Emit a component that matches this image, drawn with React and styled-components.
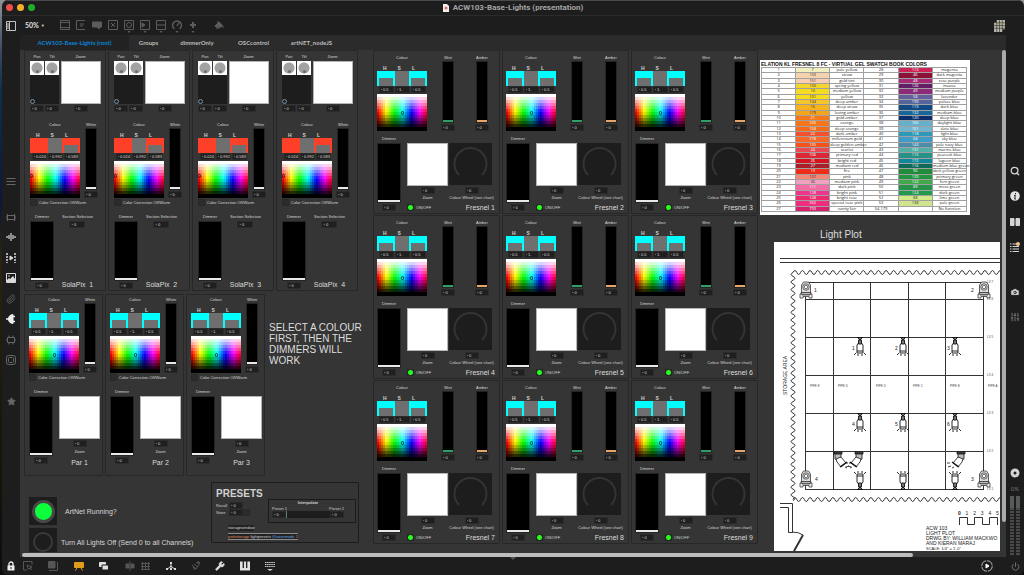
import React from "react";
import styled, { createGlobalStyle, css } from "styled-components";
import {
  Search,
  Camera,
  SlidersVertical,
  Paperclip,
  Wrench,
  Power,
  Star,
} from "lucide-react";

const GlobalStyle = createGlobalStyle`
  *, *::before, *::after {
    box-sizing: border-box;
  }
  body {
    margin: 0;
    background: linear-gradient(#8e9496, #3d4a63 50px, #0d2f4a 90px, #0c1838 200px, #2a240c 260px, #1b1707 420px, #0c0c0c);
    font-family: "Liberation Sans", Arial, sans-serif;
    color: #d0d0d0;
  }
  button, input {
    font: inherit;
    color: inherit;
    border: 0;
    margin: 0;
    padding: 0;
    background: none;
  }
`;

/* ---------- window ---------- */

const Window = styled.div`
  display: flex;
  flex-direction: column;
  height: 100vh;
  margin-left: 2px;
  border-radius: 6px;
  background: #1d1d1d;
  overflow: hidden;
`;

const TitleBar = styled.header`
  position: relative;
  display: flex;
  align-items: center;
  justify-content: center;
  height: 16px;
  flex-shrink: 0;
  gap: 4px;
  border-top: 1px solid #4a4a4a;
  border-bottom: 1px solid #2b2b2b;
  font: bold 8px/14px Roboto, "Liberation Sans", sans-serif;
  color: #a4a4a4;
  h1 {
    margin: 0;
    font: inherit;
  }
`;

const Lights = styled.div`
  position: absolute;
  left: 4px;
  top: 3px;
  display: flex;
  gap: 4px;
`;

const Light = styled.button`
  width: 7px;
  height: 7px;
  border-radius: 50%;
  background: ${(props) => props.$color};
`;

const Toolbar = styled.div`
  display: flex;
  align-items: center;
  height: 19px;
  flex-shrink: 0;
  padding: 0 17px 0 4px;
  color: #5a5d5e;
`;

const ToggleButton = styled.button`
  display: flex;
  color: #c4c4c4;
`;

const ZoomButton = styled.button`
  margin: 0 10px 0 9px;
  width: 22px;
  white-space: nowrap;
  text-align: left;
  font: bold 7px/10px Lato, sans-serif;
  color: #e0e0e0;
  span {
    font-size: 4px;
    margin-left: 1px;
    vertical-align: 1px;
  }
`;

const ToolButton = styled.button`
  display: flex;
  justify-content: center;
  width: 16px;
  margin-left: ${(props) => (props.$apart ? "10px" : "0")};
`;

const Spacer = styled.div`
  flex: 1;
`;

const Main = styled.div`
  display: flex;
  flex: 1;
  min-height: 0;
`;

const Sidebar = styled.nav`
  display: flex;
  flex-direction: column;
  align-items: center;
  width: 18px;
  flex-shrink: 0;
  color: ${(props) => props.$color || "#666"};
`;

const IconGroup = styled.div`
  display: flex;
  flex-direction: column;
  align-items: center;
  justify-content: space-between;
  height: ${(props) => props.$height}px;
  margin-top: ${(props) => props.$top}px;
`;

const IconButton = styled.button`
  display: flex;
  align-items: center;
  justify-content: center;
  width: 10px;
  height: 10px;
  color: ${(props) => props.$color || "inherit"};
`;

const Centre = styled.div`
  display: flex;
  flex-direction: column;
  flex: 1;
  min-width: 0;
  background: #353535;
`;

const Tabs = styled.div`
  display: flex;
  height: 15px;
  flex-shrink: 0;
  background: #2b2b2b;
`;

const Tab = styled.button`
  padding: 0 8px;
  font: bold 6px/14px Lato, sans-serif;
  text-align: center;
  min-width: ${(props) => props.$width}px;
  white-space: nowrap;
  color: ${(props) => (props.$active ? "#0a84d8" : "#bcbcbc")};
  background: ${(props) => (props.$active ? "#222" : "transparent")};
`;

const Scroller = styled.div`
  display: flex;
  flex: 1;
  min-height: 0;
`;

const Canvas = styled.main`
  display: flex;
  flex: 1;
  min-width: 0;
  padding-left: 4px;
  gap: 2px;
  overflow: hidden;
`;

const VerticalBar = styled.div`
  width: 4px;
  height: 94%;
  flex-shrink: 0;
  border-radius: 2px;
  background: #ababab;
`;

const HorizontalBar = styled.div`
  height: 4px;
  width: calc(90% + 4px);
  flex-shrink: 0;
  margin: 1px 0 0 2px;
  border-radius: 2px;
  background: #bdbdbd;
`;

const BottomBar = styled.footer`
  position: relative;
  display: flex;
  align-items: center;
  height: 18px;
  flex-shrink: 0;
  padding: 0 4px;
  color: #565656;
`;

const BottomButton = styled.button`
  display: flex;
  align-items: center;
  justify-content: center;
  width: 10px;
  height: 12px;
  margin-right: ${(props) => props.$gap}px;
  color: ${(props) => props.$color || "inherit"};
`;

const DrawerHandle = styled.div`
  position: absolute;
  left: 50%;
  top: 0;
  margin-left: -3px;
  border: 3px solid transparent;
  border-top-color: #555;
`;

/* ---------- patch controls ---------- */

const Row = styled.div`
  display: flex;
  align-items: ${(props) => props.$align || "flex-start"};
  gap: ${(props) => props.$gap || 0}px;
  margin-top: ${(props) => props.$top || 0}px;
`;

const Stack = styled.div`
  display: flex;
  flex-direction: column;
  align-items: ${(props) => props.$align || "center"};
  width: ${(props) => (props.$width ? props.$width + "px" : "auto")};
  gap: ${(props) => props.$gap || 0}px;
  flex-shrink: 0;
`;

const Panel = styled.section`
  width: ${(props) => props.$width}px;
  height: ${(props) => props.$height}px;
  padding: ${(props) => props.$pad};
  flex-shrink: 0;
  border: 1px solid #272727;
  border-radius: 1px;
`;

const Caption = styled.span`
  height: 7px;
  font-size: 4px;
  line-height: 7px;
  white-space: nowrap;
  color: #d4d4d4;
`;

const PanelName = styled.h2`
  margin: 0;
  font-size: 7px;
  line-height: 9px;
  font-weight: normal;
  white-space: pre;
  color: #dcdcdc;
`;

const NumberInput = styled.input`
  display: block;
  width: ${(props) => props.$width || 14}px;
  height: 7px;
  padding: 0 0 0 1px;
  border: 1px solid #2b2b2b;
  background: #1f1f1f;
  font-size: 4px;
  line-height: 5px;
  color: #dcdcdc;
`;

const FaderInput = styled.input`
  display: block;
  width: ${(props) => props.$width}px;
  height: ${(props) => props.$height}px;
  appearance: none;
  writing-mode: vertical-lr;
  direction: rtl;
  background: #000;
  border: 1px solid #242424;
  &::-webkit-slider-thumb {
    appearance: none;
    width: ${(props) => props.$width - 2}px;
    height: 2px;
    background: ${(props) => props.$color || "#e8e8e8"};
  }
`;

const CheckInput = styled.input`
  appearance: none;
  width: 7px;
  height: 7px;
  flex-shrink: 0;
  border: 1px solid #282828;
  background: ${(props) =>
    props.$led ? "radial-gradient(#24ff1c 2px, #262626 3px)" : "#2c2c2c"};
`;

const CheckLabel = styled.label`
  display: flex;
  align-items: center;
  gap: 2px;
  font-size: 4px;
  line-height: 7px;
  white-space: nowrap;
  color: #d4d4d4;
`;

const Pad = styled.div`
  width: ${(props) => props.$width}px;
  height: ${(props) => props.$height}px;
  border: 1px solid #b5b5b5;
  background: #fff;
`;

const XYPad = styled.div`
  display: flex;
  align-items: flex-end;
  width: 29px;
  height: 29px;
  background: #1d1d1d;
  &::after {
    content: "";
    width: 5px;
    height: 5px;
    border: 1px solid #7a94a8;
    border-radius: 50%;
  }
`;

const Knob = styled.div`
  display: flex;
  align-items: flex-end;
  justify-content: center;
  width: 14px;
  height: 14px;
  padding-bottom: 2px;
  background: radial-gradient(#a2a2a2 5px, #fff 6px);
  &::after {
    content: "";
    width: 3px;
    height: 3px;
    border-radius: 50%;
    background: #6e6e6e;
  }
`;

const Letters = styled.div`
  display: flex;
  justify-content: center;
  gap: 11px;
  width: 50px;
  height: 5px;
  margin-top: 5px;
  padding-right: 6px;
  font-size: 5px;
  line-height: 5px;
  font-weight: bold;
`;

const Swatch = styled.div`
  display: grid;
  grid-template-columns: 18px 14px 18px;
  width: 50px;
  height: 15px;
  background: ${(props) => props.$color};
`;

const SwatchCell = styled.div`
  margin: ${(props) => (props.$full ? "0" : "7px 2px 0")};
  background: ${(props) => (props.$off ? "transparent" : "#6f6f6f")};
`;

// hard-edged bands, 25 hues across and 12 lightness steps down
const hueBands = Array.from({ length: 25 }, (_, i) => {
  return `hsl(${Math.round((i * 360) / 25)} 100% 50%) ${i * 4}% ${i * 4 + 4}%`;
}).join(", ");

const lightBands = Array.from({ length: 12 }, (_, i) => {
  const shade = i < 6 ? 255 : 0;
  const alpha = Math.abs(5.5 - i) / 5.5;
  return `rgb(${shade} ${shade} ${shade} / ${alpha.toFixed(2)}) ${i * 3}px ${i * 3 + 3}px`;
}).join(", ");

const Spectrum = styled.div`
  display: flex;
  align-items: center;
  justify-content: ${(props) => (props.$start ? "flex-start" : "center")};
  width: 50px;
  height: 37px;
  margin-top: 1px;
  background: linear-gradient(${lightBands}),
    linear-gradient(to right, ${hueBands});
  ${(props) =>
    props.$start &&
    css`
      padding-bottom: 7px;
    `}
  &::after {
    content: "";
    width: 3px;
    height: 4px;
    border: 1px solid #0008;
    border-radius: 1px;
  }
`;

const DialBox = styled.div`
  width: 43px;
  height: 42px;
  background: #1d1d1d;
`;

function Num({ label, value = "0", width }) {
  return (
    <NumberInput
      aria-label={label}
      $width={width}
      defaultValue={"› " + value}
    />
  );
}

function Fader({ label, width, height, color }) {
  return (
    <FaderInput
      type="range"
      min="0"
      max="255"
      defaultValue="0"
      aria-label={label}
      $width={width}
      $height={height}
      $color={color}
    />
  );
}

function ColourPicker({ red }) {
  const values = red ? ["0.024", "0.992", "0.583"] : ["0.5", "1.", "0.5"];
  return (
    <Stack $width={50}>
      <Caption>Colour</Caption>
      <Letters>
        <span>H</span>
        <span>S</span>
        <span>L</span>
      </Letters>
      <Swatch $color={red ? "#ff4028" : "#00ffff"}>
        <SwatchCell $off={red} />
        <SwatchCell $full />
        <SwatchCell />
      </Swatch>
      <Row $gap={1}>
        {values.map((value, i) => (
          <Num key={i} label={"HSL"[i]} value={value} width={15} />
        ))}
      </Row>
      <Spectrum $start={red} />
    </Stack>
  );
}

function Channel({ name, color }) {
  return (
    <Stack $width={14}>
      <Caption>{name}</Caption>
      <Fader label={name} width={12} height={62} color={color} />
      <Row $top={1}>
        <Num label={name + " value"} />
      </Row>
    </Stack>
  );
}

function Correction() {
  return (
    <Row $top={1}>
      <CheckLabel>
        <CheckInput type="checkbox" />
        Color Correction Off/Warm
      </CheckLabel>
    </Row>
  );
}

function Dimmer() {
  return (
    <Stack $width={24} $gap={1}>
      <Caption>Dimmer</Caption>
      <Fader label="Dimmer" width={24} height={60} />
      <Num label="Dimmer value" />
    </Stack>
  );
}

/* ---------- fixtures ---------- */

const SectionColumn = styled.div`
  display: flex;
  flex-direction: column;
  align-items: center;
  justify-content: space-between;
  gap: 1px;
  height: 76px;
  flex: 1;
`;

function SolaPix({ number }) {
  return (
    <Panel $width={82} $height={241} $pad="2px 4px 0 5px">
      <Row $gap={1}>
        <Stack $width={14}>
          <Caption>Pan</Caption>
        </Stack>
        <Stack $width={14}>
          <Caption>Tilt</Caption>
        </Stack>
        <Stack $width={41}>
          <Caption>Zoom</Caption>
        </Stack>
      </Row>
      <Row $gap={2} $top={1}>
        <Stack>
          <Row $gap={1}>
            <Knob />
            <Knob />
          </Row>
          <XYPad />
        </Stack>
        <Pad $width={41} $height={43} />
      </Row>
      <Row $gap={1} $top={1}>
        <Num label="Pan" />
        <Num label="Tilt" />
        <Stack $width={41}>
          <Num label="Zoom" />
        </Stack>
      </Row>
      <Row $gap={4} $top={9}>
        <ColourPicker red />
        <Channel name="White" />
      </Row>
      <Correction />
      <Row $top={7}>
        <Dimmer />
        <SectionColumn>
          <Stack $gap={1}>
            <Caption>Section Selection</Caption>
            <Num label="Section Selection" width={16} />
          </Stack>
          <PanelName>{"SolaPix  " + number}</PanelName>
        </SectionColumn>
      </Row>
    </Panel>
  );
}

function Par({ number }) {
  return (
    <Panel $width={79} $height={182} $pad="1px 4px 0">
      <Row $gap={4}>
        <ColourPicker />
        <Channel name="White" />
      </Row>
      <Correction />
      <Row $top={7} $gap={6}>
        <Dimmer />
        <Stack $width={41}>
          <Row $top={8}>
            <Pad $width={41} $height={43} />
          </Row>
          <Row $top={1}>
            <Num label="Zoom" />
          </Row>
          <Row $top={1}>
            <Caption>Zoom</Caption>
          </Row>
          <Row $top={3}>
            <PanelName>{"Par " + number}</PanelName>
          </Row>
        </Stack>
      </Row>
    </Panel>
  );
}

const FresnelGrid = styled.div`
  display: grid;
  grid-template-columns: repeat(3, 127px);
  gap: 1px 2px;
  align-content: start;
  flex-shrink: 0;
`;

const FresnelFoot = styled.div`
  display: flex;
  align-items: center;
  justify-content: space-between;
  width: 88px;
  height: 9px;
  margin-top: 2px;
`;

function Fresnel({ number }) {
  return (
    <Panel $width={127} $height={164} $pad="3px">
      <Row>
        <ColourPicker />
        <Row>
          <Stack $width={14} />
          <Channel name="Mint" color="#2f9e68" />
          <Stack $width={20} />
          <Channel name="Amber" color="#e8a468" />
        </Row>
      </Row>
      <Row $top={4} $gap={6}>
        <Dimmer />
        <Stack $align="flex-start">
          <Row $gap={1} $top={8}>
            <Pad $width={41} $height={43} />
            <DialBox>
              <svg width="43" height="42" viewBox="0 0 43 42">
                <path
                  d="M10 32A16 16 0 1 1 33 32"
                  fill="none"
                  stroke="#343434"
                  strokeWidth="2"
                />
              </svg>
            </DialBox>
          </Row>
          <Row $gap={1} $top={1}>
            <Stack $width={41}>
              <Num label="Zoom" />
              <Caption>Zoom</Caption>
            </Stack>
            <Stack $width={45}>
              <Num label="Colour Wheel" />
              <Caption>Colour Wheel (see chart)</Caption>
            </Stack>
          </Row>
          <FresnelFoot>
            <CheckLabel>
              <CheckInput type="checkbox" defaultChecked $led />
              ON/OFF
            </CheckLabel>
            <PanelName>{"Fresnel " + number}</PanelName>
          </FresnelFoot>
        </Stack>
      </Row>
    </Panel>
  );
}

const LeftColumn = styled.div`
  width: 335px;
  margin-right: 12px;
  flex-shrink: 0;
`;

const Message = styled.p`
  width: 100px;
  flex-shrink: 0;
  margin: 28px 0 0 2px;
  font-size: 10px;
  line-height: 11px;
  color: #dedede;
`;

const LowerArea = styled.div`
  display: flex;
  justify-content: space-between;
  align-items: flex-start;
  padding: 6px 0 0 5px;
`;

const RoundButton = styled.button`
  display: flex;
  align-items: center;
  justify-content: center;
  width: 28px;
  height: 28px;
  flex-shrink: 0;
  background: #1d1d1d;
  &::after {
    content: "";
    width: ${(props) => (props.$on ? 23 : 20)}px;
    height: ${(props) => (props.$on ? 23 : 20)}px;
    border: ${(props) => (props.$on ? "3px solid #474747" : "2px solid #3a3a3a")};
    border-radius: 50%;
    background: ${(props) => (props.$on ? "#0cff3a" : "transparent")};
  }
`;

const SwitchLabel = styled.label`
  display: flex;
  align-items: center;
  gap: ${(props) => props.$gap}px;
  margin-bottom: 3px;
  font-size: 7px;
  line-height: 9px;
  white-space: nowrap;
  color: #d8d8d8;
`;

const Switches = styled.div`
  width: 182px;
  padding-top: 15px;
`;

const Presets = styled.section`
  width: 148px;
  height: 61px;
  padding: 5px 2px 0 4px;
  border: 1px solid #1c1c1c;
  border-radius: 1px;
  h2 {
    margin: 0;
    font-size: 10px;
    line-height: 11px;
  }
`;

const PresetField = styled.label`
  display: flex;
  align-items: center;
  font-size: 4px;
  line-height: 7px;
  span {
    width: 13px;
  }
`;

const Interpolate = styled.fieldset`
  flex: 1;
  min-width: 0;
  height: 24px;
  margin: 0 0 0 18px;
  padding: 0 11px 0 3px;
  border: 1px solid #1a1a1a;
  font-size: 4px;
  text-align: center;
`;

const InterpolateTitle = styled.div`
  line-height: 6px;
  font-weight: bold;
`;

const InterpolateRow = styled.div`
  display: flex;
  justify-content: space-between;
  line-height: 5px;
  background: ${(props) => (props.$dark ? "#1d1d1d" : "transparent")};
`;

const Cursor = styled.div`
  width: 1px;
  height: 7px;
  background: #5d7d74;
`;

const StorageButton = styled.button`
  display: block;
  width: 26px;
  height: 6px;
  margin: 2px 0 2px 12px;
  border-radius: 2px;
  background: #232323;
  font-size: 4px;
  line-height: 6px;
  text-align: center;
  white-space: nowrap;
`;

const ObjectBox = styled.code`
  display: block;
  width: 70px;
  margin-left: 12px;
  border: 1px solid #8d8d8d;
  border-width: 1px 0;
  background: #222;
  font: 4px/5px "Liberation Sans", sans-serif;
  white-space: nowrap;
  b {
    font-weight: normal;
    color: #e08a5c;
  }
  i {
    font-style: normal;
    color: #5fa6e6;
  }
`;

function PresetPanel() {
  return (
    <Presets>
      <h2>PRESETS</h2>
      <Row>
        <Row $align="flex-end" $top={3}>
          <div>
            <PresetField>
              <span>Recall</span>
              <Num label="Recall" />
            </PresetField>
            <PresetField>
              <span>Store</span>
              <Num label="Store" />
            </PresetField>
          </div>
          <CheckInput type="checkbox" aria-label="Store preset" />
        </Row>
        <Interpolate>
          <InterpolateTitle>Interpolate</InterpolateTitle>
          <InterpolateRow>
            <span>Preset 1</span>
            <span>Preset 2</span>
          </InterpolateRow>
          <InterpolateRow $dark>
            <Num label="Preset 1" />
            <Cursor />
            <Stack $width={42} />
            <Num label="Preset 2" />
          </InterpolateRow>
        </Interpolate>
      </Row>
      <StorageButton>storagewindow</StorageButton>
      <ObjectBox>
        <b>pattrstorage</b> lightpresets <i>@savemode</i> <b>1</b>
      </ObjectBox>
    </Presets>
  );
}

/* ---------- gel table ---------- */

const gels = [
  ["7", "#f3f0c0", "pale yellow", "113", "#cf2358", "magenta"],
  ["103", "#f5d3ae", "straw", "46", "#8d1239", "dark magenta"],
  ["151", "#f8cdb2", "gold tint", "48", "#a82a77", "rose purple"],
  ["100", "#f3d52c", "spring yellow", "126", "#651c67", "mauve"],
  ["10", "#f5dc20", "medium yellow", "49", "#8a2a78", "medium purple"],
  ["101", "#f6dc1c", "yellow", "58", "#62609c", "lavender"],
  ["104", "#f5c62b", "deep amber", "199", "#54649c", "palace blue"],
  ["15", "#f6b31d", "deep straw", "119", "#104b83", "dark blue"],
  ["179", "#f5a51b", "loving amber", "132", "#16689b", "medium blue"],
  ["21", "#f77817", "gold amber", "120", "#0a2f6b", "deep blue"],
  ["105", "#f5761b", "orange", "165", "#66b0cc", "daylight blue"],
  ["158", "#f46a1b", "deep orange", "161", "#70b6d1", "slate blue"],
  ["22", "#f4502c", "dark amber", "118", "#2d99b9", "light blue"],
  ["778", "#f56a2c", "millennium gold", "68", "#3e9cc8", "sky blue"],
  ["135", "#f4511c", "deep golden amber", "143", "#4b8dab", "pale navy blue"],
  ["24", "#ea4852", "scarlet", "131", "#52b2a9", "marine blue"],
  ["106", "#dd2737", "primary red", "115", "#269186", "peacock blue"],
  ["26", "#d4131e", "bright red", "172", "#10889b", "lagoon blue"],
  ["27", "#ac1d2b", "medium red", "116", "#0c6a58", "medium blue green"],
  ["19", "#ef2c17", "fire", "90", "#208c3a", "dark yellow green"],
  ["157", "#f68676", "pink", "139", "#209640", "primary green"],
  ["36", "#f3a0c0", "medium pink", "122", "#41a94c", "fern green"],
  ["111", "#f26ca6", "dark pink", "89", "#28934a", "moss green"],
  ["128", "#ee348c", "bright pink", "124", "#229a4e", "dark green"],
  ["148", "#ee2a6e", "bright rose", "88", "#d3e986", "lime green"],
  ["332", "#f02c7e", "special rose pink", "138", "#d0e58e", "pale green"],
  ["793", "#d8206c", "vanity fair", "", "#fff", "No function"],
];
const darkInk = ["7", "103", "151", "100", "10", "101", "104", "15", "179", "157", "36", "88", "138"];

const GelSheet = styled.div`
  width: 210px;
  padding: 1px 3px 3px 1px;
  background: #fff;
  color: #222;
`;

const GelTable = styled.table`
  width: 100%;
  height: 145px;
  table-layout: fixed;
  border-collapse: collapse;
  font: 4px/4px "Open Sans", sans-serif;
  text-align: center;
  caption {
    text-align: left;
    font: bold 5px/6px "Liberation Sans", sans-serif;
    white-space: nowrap;
    color: #111;
  }
  td {
    padding: 0;
    height: 5px;
    border: 1px solid #a0a0a0;
    white-space: nowrap;
  }
`;

const Gel = styled.td`
  background: ${(props) => props.$color};
  color: ${(props) => (props.$dark ? "#333" : "#fff")};
`;

function GelChart() {
  return (
    <GelSheet>
      <GelTable>
        <caption>ELATION KL FRESNEL 8 FC - VIRTUAL GEL SWATCH BOOK COLORS</caption>
        <tbody>
          {gels.map(([a, aColor, aName, b, bColor, bName], i) => (
            <tr key={i}>
              <td>{i + 1}</td>
              <Gel $color={aColor} $dark={darkInk.includes(a)}>
                {a}
              </Gel>
              <td>{aName}</td>
              <td>{i === 26 ? "54-179" : i + 28}</td>
              <Gel $color={bColor} $dark={darkInk.includes(b)}>
                {b}
              </Gel>
              <td>{bName}</td>
            </tr>
          ))}
        </tbody>
      </GelTable>
    </GelSheet>
  );
}

/* ---------- light plot ---------- */

const RightColumn = styled.div`
  flex: 1;
  min-width: 0;
  padding-top: 10px;
  overflow: hidden;
`;

const PlotTitle = styled.h2`
  margin: 14px 0 1px 60px;
  font: normal 10px/12px "Liberation Sans", sans-serif;
  color: #dcdcdc;
`;

const PlotSvg = styled.svg`
  display: block;
  margin-left: 14px;
  background: #fff;
  font-family: "Liberation Sans", sans-serif;
`;

const wave = (count, across) => {
  const step = across ? "q1.9 -4 3.8 0 t3.8 0" : "q-4 1.9 0 3.8 t0 3.8";
  return Array(count).fill(step).join(" ");
};

function MovingHead({ x, y }) {
  return (
    <g transform={`translate(${x} ${y})`} fill="#ddd" stroke="#222" strokeWidth="0.7">
      <path d="M-4.500 3V-5L-2.500 -8H2.500L4.500 -5V3Z" />
      <circle cy="-3" r="3.200" fill="#fff" />
      <circle cy="-3" r="1.800" fill="#fff" />
      <path d="M-5 2.500H5V5H-5Z" fill="#bbb" />
      <path d="M-6 4H-4V5H4V4H6V8H3V6.500H-3V8H-6Z" fill="#eee" />
    </g>
  );
}

function Spot({ x, y, flip }) {
  return (
    <g
      transform={`translate(${x} ${y}) scale(1 ${flip ? -1 : 1})`}
      fill="#fff"
      stroke="#111"
      strokeWidth="0.9"
    >
      <path d="M-3 .5H3M-2 1L0 3L2 1M-1.500 3H1.500V7H-1.500Z" fill="#777" />
      <path d="M-1.500 6L-3 8V16H3V8L1.500 6" fill="none" />
      <path d="M-3 14H3M-4 16L-6 18M-2 17V19M2 17V19M4 16L6 18" />
    </g>
  );
}

function TiltedSpot({ x, y, side }) {
  return (
    <g
      transform={`translate(${x} ${y}) scale(${side} 1)`}
      fill="#fff"
      stroke="#111"
      strokeWidth="0.8"
    >
      <path d="M-4 0H4V2H-4Z" fill="#555" />
      <path d="M-3 2L-3 7L1 9L3 5V2Z" fill="#bbb" />
      <path d="M-2 7L3 5L8 11L3 15L-1 10Z" />
      <path d="M2 15L9 10" strokeWidth="1.4" />
      <path d="M7 15L9 16M10 14L13 15M11 11L14 11" />
    </g>
  );
}

function LightPlot() {
  const columns = [806, 834, 871, 909, 946, 984];
  const rows = [282, 299, 337, 375, 413, 451, 489];
  const spots = [860, 903, 955];
  return (
    <PlotSvg width="226" height="309" viewBox="774 242 226 309">
      <g fill="none" stroke="#333" strokeWidth="1">
        <path d="M780 258.5H1000M780 262.5H1000" />
        <path d={"M793 272.5" + wave(28, true)} />
        <path d={"M793 272.5" + wave(30, false)} />
        <path d={"M793 499.5" + wave(28, true)} />
        {columns.map((x) => (
          <path key={x} d={`M${x - 0.5} 282V490`} />
        ))}
        {rows.map((y) => (
          <path key={y} d={`M805 ${y + 0.5}H984`} />
        ))}
        <path d="M780 503.5H792.5V532.5H788.5V507.5H780M792 532Q799 532 803 535" />
        <path d="M803 535L794 551" strokeWidth="2" />
        <path d="M959.5 525V517.5H967.5V524.5H974.5V517.5H982.5V524.5H989.5V517.5H997.5V525" />
      </g>
      {spots.map((x, i) => (
        <g key={x} fontSize="5" fill="#222">
          <Spot x={x} y={337} />
          <Spot x={x} y={413} />
          <Spot x={x} y={490} flip />
          <text x={x - 8} y={350}>
            {i + 1}
          </text>
          <text x={x - 8} y={426}>
            {i + 4}
          </text>
        </g>
      ))}
      <TiltedSpot x={838} y={452} side={1} />
      <TiltedSpot x={859} y={452} side={-1} />
      <TiltedSpot x={961} y={452} side={-1} />
      <MovingHead x={806} y={290} />
      <MovingHead x={984} y={290} />
      <MovingHead x={806} y={479} />
      <MovingHead x={984} y={479} />
      <g fontSize="5" fill="#222">
        <text x="814" y="292">1</text>
        <text x="971" y="292">2</text>
        <text x="815" y="481">4</text>
        <text x="971" y="481">3</text>
        <text x="926" y="530">ACW 103</text>
        <text x="926" y="535">LIGHT PLOT</text>
        <text x="926" y="540">DRWG BY: WILLIAM MACKWO</text>
        <text x="926" y="545">AND KIERAN MARAJ</text>
        <text x="926" y="550" fontSize="4">
          SCALE: 1/4" = 1'-0"
        </text>
        {[0, 1, 2, 3, 4, 5].map((n) => (
          <text key={n} x={958 + n * 7.6} y="515" fontWeight={n ? 400 : 700}>
            {n}
          </text>
        ))}
        <text transform="translate(787 395) rotate(-90)">STORAGE AREA</text>
      </g>
      <g fontSize="3" fill="#444">
        {rows.map((y, i) => (
          <text key={y} x="987" y={y + 1}>
            {"LX " + (7 - i)}
          </text>
        ))}
        {["E", "D", "D", "C", "B", "A"].map((name, i) => (
          <text key={i} x={[810, 838, 876, 913, 950, 988][i]} y="387">
            {"PIPE " + name}
          </text>
        ))}
      </g>
    </PlotSvg>
  );
}

/* ---------- icons ---------- */

const Glyph = ({ size = 10, children }) => (
  <svg
    width={size}
    height={size}
    viewBox="0 0 10 10"
    fill="none"
    stroke="currentColor"
    strokeWidth="1"
  >
    {children}
  </svg>
);

const tools = [
  { name: "Object", art: <path d="M.5 .5H9.5V9.5H.5ZM.5 2.5H9.5M.5 7.5H9.5" /> },
  { name: "Message", art: <path d="M9 .5H.5V9.5H9M4 4H8M4 6H7" /> },
  {
    name: "Comment",
    art: <path d="M.5 2H9.5V7H8L7 9L5 7H.5Z" fill="currentColor" />,
  },
  { name: "Toggle", art: <path d="M.5 .5H9.5V9.5H.5ZM3 3L7 7M7 3L3 7" /> },
  {
    name: "Button",
    more: true,
    art: (
      <>
        <path d="M.5 .5H9.5V9.5H.5Z" />
        <circle cx="5" cy="5" r="2.5" />
      </>
    ),
  },
  {
    name: "Number",
    more: true,
    art: (
      <>
        <path d="M.5 .5H9.5V9.5H.5Z" />
        <path d="M2 3L5 5L2 7Z" fill="currentColor" />
      </>
    ),
  },
  { name: "Slider", more: true, art: <path d="M.5 .5H9.5V9.5H.5ZM.5 5H9.5" /> },
  {
    name: "Dial",
    more: true,
    art: <path d="M2.5 9A4.4 4.4 0 1 1 7.5 9M5 6L7 2.5" strokeWidth="1.4" />,
  },
  { name: "Add", more: true, art: <path d="M5 2V8M2 5H8" strokeWidth="2" /> },
];

function ToolGlyph({ more, children }) {
  return (
    <svg
      width="10"
      height="15"
      viewBox="0 -2 10 15"
      fill="none"
      stroke="currentColor"
    >
      {children}
      {more && <path d="M3.5 11H6.5L5 13Z" fill="currentColor" stroke="none" />}
    </svg>
  );
}

function Tools() {
  return (
    <Toolbar>
      <ToggleButton aria-label="Toggle sidebar">
        <Glyph>
          <path d="M.5 .5H9.5V9.5H.5ZM3.5 1V9M1 3H3M1 5H3M1 7H3" />
        </Glyph>
      </ToggleButton>
      <ZoomButton>
        50%<span> ▼</span>
      </ZoomButton>
      {tools.map((tool) => (
        <ToolButton key={tool.name} aria-label={tool.name}>
          <ToolGlyph more={tool.more}>{tool.art}</ToolGlyph>
        </ToolButton>
      ))}
      <ToolButton aria-label="Fill" $apart>
        <ToolGlyph>
          <path d="M1 6L5 2L8.5 5.5L7 7H2Z" fill="currentColor" />
          <path d="M4 3V1M9 6V8M2 8H6" />
        </ToolGlyph>
      </ToolButton>
      <Spacer />
      <ToolButton aria-label="Grid">
        <svg width="11" height="12" viewBox="0 0 12 13">
          <path
            d="M0 3H3V0H12V10H9V13H0Z"
            fill="#b5b5a8"
          />
          <path
            d="M3 3V13M6 0V13M9 0V10M0 6H12M0 9H12M3 3H12"
            stroke="#333"
            strokeWidth=".7"
          />
          <path d="M7 3H9V5H7Z" fill="#b09a2c" />
        </svg>
      </ToolButton>
    </Toolbar>
  );
}

function LeftSidebar() {
  return (
    <Sidebar>
      <IconGroup $top={141} $height={10}>
        <IconButton aria-label="List">
          <Glyph>
            <path d="M.5 2.5H9.5M.5 5.5H9.5M.5 8.5H9.5" />
          </Glyph>
        </IconButton>
      </IconGroup>
      <IconGroup $top={26} $height={153}>
        <IconButton aria-label="Objects">
          <Glyph>
            <path d="M1 3.5H9V7.5H1ZM1.500 2V9M8.500 2V9" />
          </Glyph>
        </IconButton>
        <IconButton aria-label="Audio" $color="#a8a8a8">
          <Glyph>
            <path d="M1 4V6M3 3V7M5 1V9M7 3V7M9 4V6" strokeWidth="1.600" />
          </Glyph>
        </IconButton>
        <IconButton aria-label="Video" $color="#dadada">
          <Glyph>
            <path d="M1 0V10M9 0V10" strokeDasharray="2 1" strokeWidth="1.5" />
            <path d="M4 3L7 5L4 7Z" fill="currentColor" />
          </Glyph>
        </IconButton>
        <IconButton aria-label="Images" $color="#dadada">
          <Glyph>
            <path d="M.5 .5H9.5V9.5H.5Z" />
            <path d="M1 9V7L3 5L4 6L7 3L9 6V9Z" fill="currentColor" stroke="none" />
            <circle cx="3" cy="3" r=".8" fill="currentColor" stroke="none" />
          </Glyph>
        </IconButton>
        <IconButton aria-label="Attachments">
          <Paperclip size={10} />
        </IconButton>
        <IconButton aria-label="Plug-ins" $color="#efefef">
          <Glyph>
            <path
              d="M0 5H3M6 2.5H9M6 7.5H9"
              strokeWidth="1.4"
            />
            <path d="M7 0.5V9.5Q2.500 9 2.500 5T7 .5Z" fill="currentColor" />
          </Glyph>
        </IconButton>
        <IconButton aria-label="Modules">
          <Glyph>
            <path d="M1.500 2.500H8.500V7.500H1.500ZM3 .5V2M7 .5V2M3 8V9.500M7 8V9.500M0 5H1M9 5H10" />
          </Glyph>
        </IconButton>
        <IconButton aria-label="Packages">
          <Glyph>
            <rect x=".5" y=".5" width="9" height="9" rx="2" />
            <rect x="2.500" y="2.500" width="5" height="5" rx="1" />
          </Glyph>
        </IconButton>
      </IconGroup>
      <IconGroup $top={31} $height={10}>
        <IconButton aria-label="Favourites">
          <Star size={9} fill="currentColor" />
        </IconButton>
      </IconGroup>
    </Sidebar>
  );
}

const Meters = styled.div`
  display: flex;
  gap: 2px;
  height: 60px;
  margin-top: 2px;
  i {
    width: 4px;
    background: repeating-linear-gradient(#484a4a 0 2px, #242424 2px 3px);
    border-top: 12px solid #565a5a;
  }
`;

const Percent = styled.span`
  margin-top: 6px;
  font: 6px/10px Lato, sans-serif;
  color: #777;
`;

function RightSidebar() {
  return (
    <Sidebar $color="#d4d4d4">
      <IconGroup $top={131} $height={86}>
        <IconButton aria-label="Search">
          <Search size={10} strokeWidth={3} />
        </IconButton>
        <IconButton aria-label="Inspector">
          <Glyph>
            <circle cx="5" cy="5" r="4.800" fill="#e4e4e4" stroke="none" />
            <path d="M5.500 2V3.300M4 4.500H5.300L4.700 8H6" stroke="#1d1d1d" />
          </Glyph>
        </IconButton>
        <IconButton aria-label="Reference">
          <Glyph>
            <path d="M.5 1.500H4V8.500H.5ZM6 1.500H9.500V8.500H6Z" fill="currentColor" />
          </Glyph>
        </IconButton>
        <IconButton aria-label="Console">
          <Glyph>
            <path d="M0 2H1.500M2.500 2H7M0 4.500H1.500M2.500 4.500H9M0 7H1.500M2.500 7H9M0 9.500H1.500M2.500 9.500H9" />
            <circle cx="8" cy="2" r="2" fill="#f2c08c" stroke="none" />
          </Glyph>
        </IconButton>
      </IconGroup>
      <IconGroup $top={35} $height={35}>
        <IconButton aria-label="Snapshots">
          <Camera size={12} fill="#d4d4d4" stroke="#1d1d1d" />
        </IconButton>
        <IconButton aria-label="Parameters" $color="#888">
          <SlidersVertical size={10} />
        </IconButton>
      </IconGroup>
      <IconGroup $top={146} $height={10}>
        <IconButton aria-label="Audio output">
          <Glyph>
            <circle cx="5" cy="5" r="3" strokeWidth="3" />
          </Glyph>
        </IconButton>
      </IconGroup>
      <Percent>0%</Percent>
      <Meters>
        <i />
        <i />
      </Meters>
    </Sidebar>
  );
}

function Footer() {
  return (
    <BottomBar>
      <BottomButton aria-label="Lock" $gap={7} $color="#efefef">
        <Glyph>
          <path d="M3 5V3A2 2 0 0 1 7 3V5" strokeWidth="1.300" />
          <path d="M1.500 4.500H8.500V9.500H1.500Z" fill="currentColor" stroke="none" />
          <path d="M5 6V8" stroke="#1d1d1d" />
        </Glyph>
      </BottomButton>
      <BottomButton aria-label="Select" $gap={15}>
        <Glyph>
          <path d="M9 4V.5H.5V9H4M4 4L9 6L7 7L9 9M4 4L5.500 8.500L7 7" />
        </Glyph>
      </BottomButton>
      <BottomButton aria-label="Layers" $gap={16}>
        <Glyph>
          <path d="M.5 .5H7V7H.5Z" fill="currentColor" />
          <path d="M9.500 1V9.500H1" />
        </Glyph>
      </BottomButton>
      <BottomButton aria-label="Presentation" $gap={15} $color="#e09a1c">
        <Glyph>
          <path d="M.5 1.500H9.500V6.500H.5Z" fill="currentColor" />
          <path d="M3 7L1.500 9.500M7 7L8.500 9.500" />
        </Glyph>
      </BottomButton>
      <BottomButton aria-label="Windows" $gap={16} $color="#e0e0e0">
        <Glyph>
          <path d="M.5 1.500H6.500V5.500H.5Z" fill="currentColor" />
          <path d="M3 4H9.500V9H3Z" fill="currentColor" stroke="#1d1d1d" />
        </Glyph>
      </BottomButton>
      <BottomButton aria-label="Mute" $gap={5}>
        <Glyph>
          <path d="M1 3H4V7H1ZM6 3H9V7H6ZM5 0V10" fill="currentColor" />
        </Glyph>
      </BottomButton>
      <BottomButton aria-label="Snap to grid" $gap={16}>
        <Glyph>
          <path d="M2.500 1V9M5.500 1V9M8.500 1V9M1 2.500H10M1 5.500H10M1 8.500H10" />
        </Glyph>
      </BottomButton>
      <BottomButton aria-label="Hierarchy" $gap={15} $color="#d8d8d8">
        <Glyph>
          <path d="M5 2V5M1.500 8L5 5L8.500 8M5 5V8" />
          <path d="M4 1H6V3H4ZM0 7H2V9H0ZM4 7H6V9H4ZM8 7H10V9H8Z" fill="currentColor" stroke="none" />
        </Glyph>
      </BottomButton>
      <BottomButton aria-label="Probe" $gap={14}>
        <Glyph>
          <path d="M1 4L5 8L9 2M3 3L7 6M7 0V3M5.500 1.500H9M2 6L4 9" />
        </Glyph>
      </BottomButton>
      <BottomButton aria-label="Tools" $gap={15} $color="#e0e0e0">
        <Wrench size={10} fill="currentColor" />
      </BottomButton>
      <BottomButton aria-label="Piano" $gap={15} $color="#e0e0e0">
        <Glyph>
          <path d="M0 .5H10V9.500H0Z" fill="currentColor" stroke="none" />
          <path d="M3.300 0V7M6.700 0V7" stroke="#1d1d1d" strokeWidth="1.300" />
        </Glyph>
      </BottomButton>
      <BottomButton aria-label="Keyboard" $gap={0} $color="#d0d0d0">
        <Glyph>
          <path d="M0 1.500H10M0 3.500H10M0 5.500H10" strokeDasharray="1.500 .6" />
          <path d="M2 8H8L5 10Z" fill="currentColor" stroke="none" />
        </Glyph>
      </BottomButton>
      <DrawerHandle />
      <Spacer />
      <BottomButton aria-label="Play" $gap={18} $color="#b4b4b4">
        <svg
          width="12"
          height="12"
          viewBox="0 0 12 12"
          fill="none"
          stroke="currentColor"
          overflow="visible"
        >
          <circle cx="6" cy="6" r="5.200" strokeDasharray="7 1" />
          <path d="M5 4L8 6L5 8Z" fill="#fff" stroke="#fff" />
        </svg>
      </BottomButton>
      <BottomButton aria-label="Power" $gap={0} $color="#888">
        <Power size={9} />
      </BottomButton>
    </BottomBar>
  );
}

const App = () => {
  return (
    <>
      <GlobalStyle />
      <Window>
        <TitleBar>
          <Lights>
            <Light aria-label="Close" $color="#f14e4b" />
            <Light aria-label="Minimise" $color="#f8b125" />
            <Light aria-label="Zoom" $color="#1fae2c" />
          </Lights>
          <svg width="6" height="8" viewBox="0 0 6 8">
            <path d="M0 0H4L6 2V8H0Z" fill="#f0f0f0" />
            <circle cx="3" cy="4" r="1.500" fill="#d66" />
          </svg>
          <h1>ACW103-Base-Lights (presentation)</h1>
        </TitleBar>
        <Tools />
        <Main>
          <LeftSidebar />
          <Centre>
            <Tabs role="tablist">
              <Tab role="tab" $active $width={109}>
                ACW103-Base-Lights (root)
              </Tab>
              <Tab role="tab" $width={39}>Groups</Tab>
              <Tab role="tab" $width={58}>dimmerOnly</Tab>
              <Tab role="tab" $width={55}>OSCcontrol</Tab>
              <Tab role="tab" $width={61}>artNET_nodeJS</Tab>
            </Tabs>
            <Scroller>
              <Canvas>
                <LeftColumn>
                  <Row $gap={2}>
                    {[1, 2, 3, 4].map((n) => (
                      <SolaPix key={n} number={n} />
                    ))}
                  </Row>
                  <Row $gap={2} $top={3}>
                    {[1, 2, 3].map((n) => (
                      <Par key={n} number={n} />
                    ))}
                    <Message>
                      SELECT A COLOUR FIRST, THEN THE DIMMERS WILL WORK
                    </Message>
                  </Row>
                  <LowerArea>
                    <Switches>
                      <SwitchLabel $gap={8}>
                        <RoundButton $on />
                        ArtNet Running?
                      </SwitchLabel>
                      <SwitchLabel $gap={4}>
                        <RoundButton />
                        Turn All Lights Off (Send 0 to all Channels)
                      </SwitchLabel>
                    </Switches>
                    <PresetPanel />
                  </LowerArea>
                </LeftColumn>
                <FresnelGrid>
                  {[1, 2, 3, 4, 5, 6, 7, 8, 9].map((n) => (
                    <Fresnel key={n} number={n} />
                  ))}
                </FresnelGrid>
                <RightColumn>
                  <GelChart />
                  <PlotTitle>Light Plot</PlotTitle>
                  <LightPlot />
                </RightColumn>
              </Canvas>
              <VerticalBar />
            </Scroller>
            <HorizontalBar />
          </Centre>
          <RightSidebar />
        </Main>
        <Footer />
      </Window>
    </>
  );
};

export default App;
